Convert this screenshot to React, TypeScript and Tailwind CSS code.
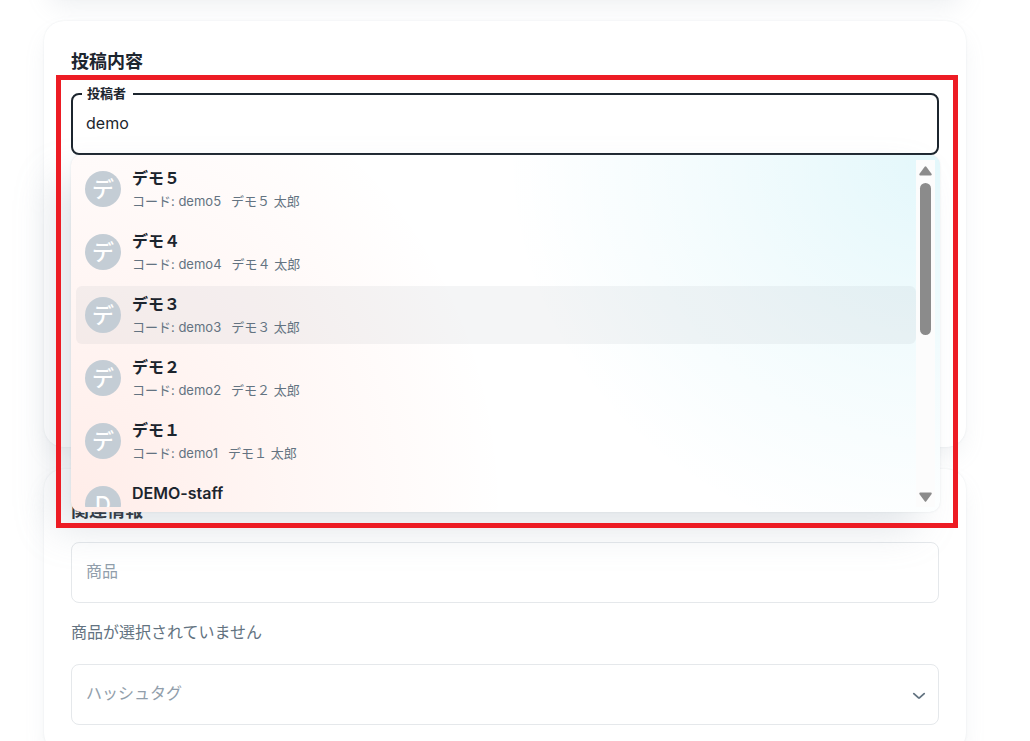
import { useState } from 'react';
import { clsx } from 'clsx';

const authors = [
  { id: 'demo5', name: 'デモ５', fullName: 'デモ５ 太郎', initial: 'デ' },
  { id: 'demo4', name: 'デモ４', fullName: 'デモ４ 太郎', initial: 'デ' },
  { id: 'demo3', name: 'デモ３', fullName: 'デモ３ 太郎', initial: 'デ' },
  { id: 'demo2', name: 'デモ２', fullName: 'デモ２ 太郎', initial: 'デ' },
  { id: 'demo1', name: 'デモ１', fullName: 'デモ１ 太郎', initial: 'デ' },
  { id: 'demo-staff', name: 'DEMO-staff', fullName: '', initial: 'D' },
];

const cardClass =
  'rounded-[20px] bg-white shadow-[0_0_2px_rgba(145,158,171,0.2),0_12px_24px_-4px_rgba(145,158,171,0.14)]';

const inputClass =
  'block h-[61px] w-full rounded-lg border border-[#e5e8eb] bg-transparent px-3.5 pb-1 text-base text-[#1c252e] outline-none placeholder:text-[#919eab]';

function Scrollbar() {
  return (
    <div className="flex w-[19px] shrink-0 flex-col items-center bg-[#fcfcfc] pt-1.5 pb-[5px]" aria-hidden="true">
      <svg width="13" height="10" viewBox="0 0 13 10" fill="#8b8b8b">
        <path d="M5.7.7a1 1 0 0 1 1.6 0l5.2 7.1c.6.9.1 1.7-.8 1.7H1.3C.4 9.5 0 8.7.5 7.8z" />
      </svg>
      <div className="mt-[7px] h-[152px] w-[11px] rounded-full bg-[#8b8b8b]" />
      <svg className="mt-auto" width="13" height="10" viewBox="0 0 13 10" fill="#8b8b8b">
        <path d="M5.7 9.3a1 1 0 0 0 1.6 0l5.2-7.1c.6-.9.1-1.7-.8-1.7H1.3C.4.5 0 1.3.5 2.2z" />
      </svg>
    </div>
  );
}

function AuthorList({ activeId, onSelect }: { activeId: string; onSelect: (id: string) => void }) {
  return (
    <div className="absolute top-full left-0 -right-px z-10 flex h-[357px] rounded-[10px] bg-white bg-[radial-gradient(ellipse_435px_400px_at_100%_0%,rgba(0,184,217,0.11),rgba(0,184,217,0.05)_50%,rgba(0,184,217,0)),radial-gradient(ellipse_435px_480px_at_0%_100%,rgba(255,86,48,0.11),rgba(255,86,48,0.05)_50%,rgba(255,86,48,0))] p-[5px] shadow-[0_0_2px_rgba(145,158,171,0.24),-20px_20px_40px_-4px_rgba(145,158,171,0.28)]">
      <ul id="author-list" role="listbox" aria-label="投稿者" className="flex min-w-0 flex-1 flex-col gap-[5px] overflow-hidden">
        {authors.map((author) => (
          <li
            key={author.id}
            role="option"
            aria-selected={author.id === activeId}
            onClick={() => onSelect(author.id)}
            className={clsx(
              'flex h-[58px] shrink-0 cursor-pointer items-center gap-[11px] rounded-md px-[9px]',
              author.id === activeId && 'bg-[#919eab]/10'
            )}
          >
            <div className="flex size-9 shrink-0 items-center justify-center rounded-full bg-[#c4cdd5] text-[22px] font-medium text-white">
              {author.initial}
            </div>
            <div className="h-12 min-w-0 pt-px">
              <div className="text-base leading-6 font-semibold text-[#1c252e]">{author.name}</div>
              {author.fullName && (
                <div className="flex gap-2.5 text-[13px] leading-[22px] text-[#637381]">
                  <span>コード: {author.id}</span>
                  <span>{author.fullName}</span>
                </div>
              )}
            </div>
          </li>
        ))}
      </ul>
      <Scrollbar />
    </div>
  );
}

export default function App() {
  const [query, setQuery] = useState('demo');
  const [activeId, setActiveId] = useState('demo3');

  return (
    <main
      lang="ja"
      className="flex h-screen flex-col gap-[22px] overflow-hidden bg-white pr-16 pl-11 font-['Inter','Noto_Sans_CJK_JP',sans-serif] text-[#1c252e]"
    >
      <div className={clsx(cardClass, '-mt-[65px] h-16 shrink-0')} />

      <section className={clsx(cardClass, 'min-h-[426px] shrink-0 px-[27px] pt-[27px]')}>
        <h2 className="text-lg leading-7 font-semibold">投稿内容</h2>
        <div className="relative mt-[17px]">
          <label
            htmlFor="author"
            className="absolute -top-2.5 left-[11px] bg-white pr-[7px] pl-[5px] text-[13px] leading-5 font-semibold"
          >
            投稿者
          </label>
          <input
            id="author"
            type="text"
            role="combobox"
            aria-expanded="true"
            aria-controls="author-list"
            value={query}
            onChange={(e) => setQuery(e.target.value)}
            className="block h-[62px] w-full rounded-lg border-2 border-[#1c252e] bg-transparent px-[13px] pb-0.5 text-base outline-none"
          />
          <AuthorList activeId={activeId} onSelect={setActiveId} />
          {/* Highlight frame around the author picker */}
          <div className="pointer-events-none absolute -top-[18px] -right-[19px] -left-[15px] z-20 h-[453px] border-5 border-[#ed1c24]" />
        </div>
      </section>

      <section className={clsx(cardClass, 'shrink-0 px-[27px] pt-7 pb-7')}>
        <h2 className="text-lg leading-7 font-semibold">関連情報</h2>
        <input type="text" aria-label="商品" placeholder="商品" className={clsx(inputClass, 'mt-[17px]')} />
        <p className="mt-[17px] text-base leading-6 text-[#637381]">商品が選択されていません</p>
        <div className="relative mt-5">
          <input type="text" aria-label="ハッシュタグ" placeholder="ハッシュタグ" className={inputClass} />
          <button type="button" aria-label="開く" className="absolute top-[22px] right-2.5 text-[#637381]">
            <svg width="20" height="20" viewBox="0 0 20 20" fill="none" stroke="currentColor" strokeWidth="1.8" strokeLinecap="round">
              <path d="M4.8 7.6l4.8 4.3a.6.6 0 0 0 .8 0l4.8-4.3" />
            </svg>
          </button>
        </div>
      </section>
    </main>
  );
}
